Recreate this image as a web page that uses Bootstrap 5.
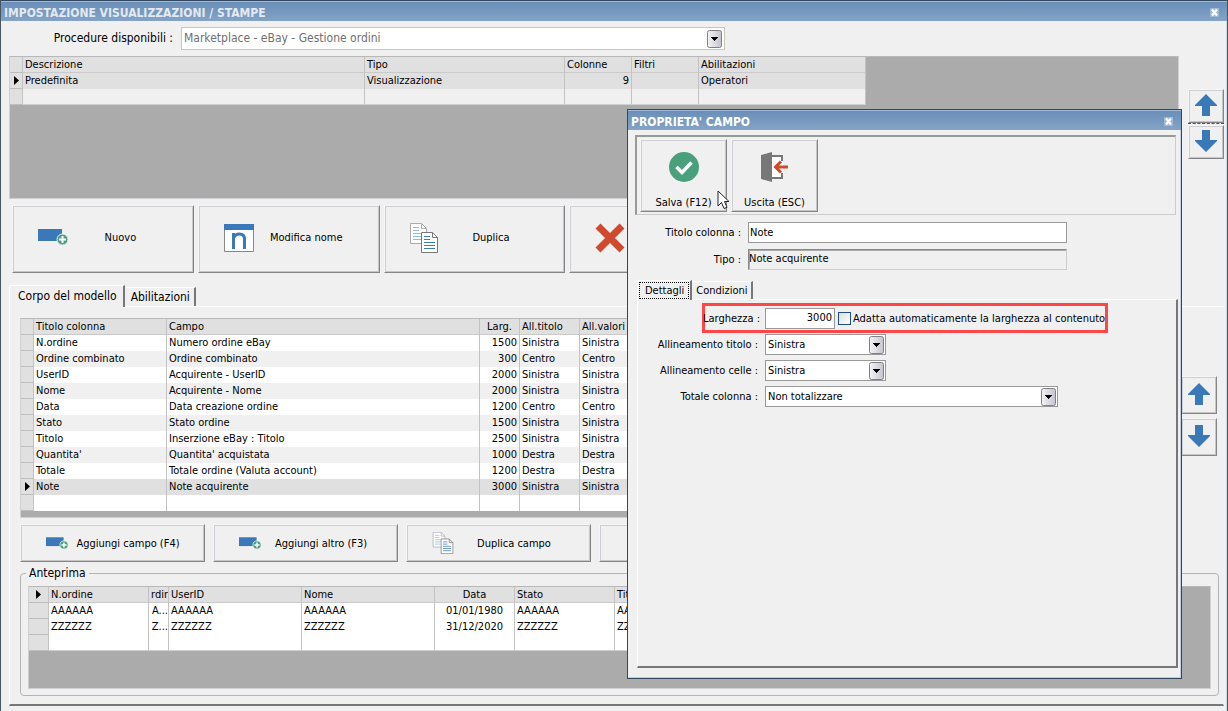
<!DOCTYPE html>
<html lang="it">
<head>
<meta charset="utf-8">
<meta name="viewport" content="width=device-width, initial-scale=1">
<title>Impostazione visualizzazioni / stampe</title>
<link href="https://cdn.jsdelivr.net/npm/bootstrap@5.3.0/dist/css/bootstrap.min.css" rel="stylesheet">
<style>
  :root { --face: #f0f0f0; --line: #c3c3c3; --well: #ababab; --head: #e0e0e0; }
  body { font: 11px/15px "DejaVu Sans Condensed", "Liberation Sans", sans-serif; color: #000; background: var(--face); }
  button, input, select { font: inherit; color: inherit; }
  .win { min-height: 100vh; border: 1px solid #4a5562; border-top-color: #33485e; box-shadow: inset -1px -1px #cfdae6; padding: 0 3px 7px 0; }
  .caption { height: 20px; margin-right: -3px; background: linear-gradient(#6a8fb8, #84a3c6); border-top: 1px solid #9dbbd8; color: #e4e9f0; font-weight: bold; font-size: 12px; line-height: 16px; padding: 2px 8px 0 3px; }
  .caption h1 { font: inherit; margin: 0; }
  .caption button { width: 9px; height: 9px; border: 0; padding: 0; background: #9fb8d3; display: flex; margin-bottom: 1px; }
  .big { font-size: 12px; }
  .picker { padding: 6px 0; }
  .picker label { width: 168px; }
  .combo { appearance: none; border: 1px solid #999; background: #fff url("data:image/svg+xml,%3Csvg xmlns='http://www.w3.org/2000/svg' width='15' height='18'%3E%3Cdefs%3E%3ClinearGradient id='g'%3E%3Cstop stop-color='%23f4f4f7'/%3E%3Cstop offset='1' stop-color='%23c4c4ce'/%3E%3C/linearGradient%3E%3C/defs%3E%3Crect x='.5' y='.5' width='14' height='17' rx='2' fill='url(%23g)' stroke='%23808085'/%3E%3Cpath d='M4 7h7v1h-1v1h-1v1h-1v1h-1v-1h-1v-1h-1v-1h-1z'/%3E%3C/svg%3E") no-repeat right 1px center; height: 21px; padding: 0 20px 0 2px; border-radius: 0; }
  .combo-main { width: 544px; height: 23px; color: #707070; border-color: #c8c8b8; background-position: right 2px center; padding-bottom: 1px; }
  .combo-short { width: 121px; }
  .combo-long { width: 293px; }
  .well { background: var(--well); border: 1px solid #d0d0d4; border-top-color: #b8b8b8; overflow: hidden; }
  .well-top { height: 143px; margin-right: 9px; }
  .well-body { padding-bottom: 6px; }
  .gridtab { table-layout: fixed; border-collapse: separate; border-spacing: 0; width: 0; }
  .gridtab th, .gridtab td { height: 16px; line-height: 16px; padding: 0 2px; font-weight: normal; border-right: 1px solid var(--line); background: #fff; white-space: nowrap; overflow: hidden; }
  .gridtab thead th { background: var(--head); border-bottom: 1px solid #cacaca; line-height: 15px; }
  .gridtab tbody tr:nth-child(even) td { background: var(--face); }
  .gridtab tr > :first-child { background: var(--head) !important; border-bottom: 1px solid #bdbdbd; padding: 0; }
  .gridtab tbody tr.current td { background: var(--head); }
  .gridtab tbody tr.plain td { background: var(--face); }
  .gridtab .selhere { background: #f2f2f2 !important; }
  .gridtab svg { display: block; margin: auto; }
  .gridtab .lastrow td { border-bottom: 1px solid #d0d0d0; }
  .prevtab tbody tr td { background: #fff !important; }
  .gridtab .tight { padding: 0; text-align: right; }
  .face { background: var(--face); border: 1px solid #f6f6f6; border-right-color: #858585; border-bottom-color: #858585; box-shadow: inset 1px 1px #cdcdd3, inset -1px -1px #c6c6c6; padding: 0; border-radius: 0; }
  .actions { padding-left: 3px; margin-top: 6px; gap: 4px; height: 68px; overflow: hidden; }
  .actions .face { flex: 0 0 15%; padding: 0 20px 3px 25px; }
  .rowbtns { gap: 8px; height: 38px; margin-top: 6px; overflow: hidden; }
  .rowbtns .face { flex: 0 0 185px; padding: 0 16px 0 25px; }
  .arrow { width: 36px; height: 34px; display: grid; place-items: center; }
  .arrow-tall { height: 38px; }
  .arrow svg { margin-bottom: 3px; }
  .echo { border-top: 1px dashed #33567c; height: 2px; }
  .side-top { padding-top: 33px; }
  .side-body { padding: 58px 2px 0 0; }
  .tabrow button { border: 0; border-top: 1px solid #fff; border-right: 2px solid #777; background: var(--face); padding: 0 4px 0 6px; height: 19px; border-radius: 2px 0 0 0; }
  .tabrow .active { border-left: 1px solid #fff; height: 22px; margin-bottom: -1px; position: relative; }
  .maintabs .active { padding: 0 6px 0 8px; }
  .sheet { border: 1px solid #fff; border-right-color: transparent; border-bottom: 2px solid #777; padding: 11px 4px 8px 10px; }
  .group { border: 1px solid #b4b4b4; border-radius: 4px; padding: 5px 7px 6px; margin: 4px 0 0; height: 130px; }
  .group legend { float: none; width: auto; font-size: 12px; line-height: 15px; padding: 0 3px; margin: 0 0 0 -2px; }
  .group .well { height: 103px; }
  .dialogbox { position: absolute; left: 626px; top: 108px; width: 555px; height: 570px; background: var(--face); border: 1px solid #33485e; box-shadow: inset -1px -1px #bfd0e2; }
  .dialogbox .caption { margin: 0; color: #fff; }
  .tools { margin: 5px 5px 0 7px; height: 80px; padding: 2px 3px; gap: 4px; border: 1px solid #ccc; border-top: 2px solid #999; border-left: 2px solid #999; }
  .tools .face { width: 87px; height: 73px; padding: 12px 0 1px; }
  .fields { margin-top: 7px; display: grid; grid-template-columns: 113px 319px; column-gap: 7px; row-gap: 6px; align-items: center; }
  .fields label, .detail label { text-align: right; }
  .txt { border: 1px solid #999; height: 21px; border-radius: 0; background: #fff; padding: 0 2px 1px 1px; flex-shrink: 0; }
  .txt-flat { background: var(--face); padding: 0 0 3px; border-color: #888 #ccc #ccc #888; box-shadow: inset 1px 1px #aaa; }
  .txt-num { width: 70px; text-align: right; }
  .dlgtabs { margin: 10px 0 0 9px; }
  .dlgtabs button { height: 18px; padding: 0 3px 0 4px; }
  .dlgtabs .active { height: 20px; padding: 1px; }
  .dlgtabs .active span { display: block; border: 1px dotted #000; padding: 0 4px 0 5px; height: 17px; }
  .dlgsheet { margin: 0 3px 10px 9px; border: 1px solid #fff; border-right: 2px solid #777; border-bottom: 2px solid #777; padding-top: 3px; }
  .marked { border: 3px solid #ff4747; width: 406px; height: 30px; margin-left: 64px; }
  .marked label { white-space: nowrap; }
  .marked .wlabel { width: 55px; display: flex; justify-content: flex-end; margin-right: 5px; }
  .marked input[type=checkbox] { appearance: none; flex-shrink: 0; width: 13px; height: 13px; border: 1px solid #1f4e80; background: linear-gradient(135deg, #dedede, #fff); margin: 0 2px 0 3px; }
  .detail { display: grid; grid-template-columns: 120px auto; column-gap: 7px; row-gap: 5px; align-items: center; justify-content: start; margin-top: 1px; }
  .pointer { position: absolute; left: 89px; top: 80px; }
</style>
</head>
<body>
<svg width="0" height="0" class="position-absolute" aria-hidden="true">
  <defs>
    <symbol id="i-x" viewBox="0 0 9 9"><path d="M2 1.500l5 6M7 1.500l-5 6" stroke="#fff" stroke-width="2.200"/></symbol>
    <symbol id="i-up" viewBox="0 0 22 22"><path d="M11 0L22 11V12H15V22H7V12H0V11z" fill="#3b78b8"/></symbol>
    <symbol id="i-down" viewBox="0 0 22 22"><path d="M11 22L22 11V10H15V0H7V10H0V11z" fill="#3b78b8"/></symbol>
    <symbol id="i-new" viewBox="0 0 30 17"><path d="M0 0h24v12H0z" fill="#3b78b8"/><circle cx="24.500" cy="10.500" r="5.500" fill="#4a9f7d" stroke="#f0f0f0"/><path d="M24.500 7v7M21 10.500h7" stroke="#fff" stroke-width="2"/></symbol>
    <symbol id="i-copy" viewBox="0 0 28 30"><g fill="#fff" stroke="#aaa"><path d="M.5.500h11l5 5v15H.5z"/><path d="M11.500.500v5h5" fill="none"/></g><path d="M3 4.500h6M3 7.500h6M3 10.500h11M3 13.500h8M3 16.500h8" stroke="#8bbbe3"/><g fill="#fff" stroke="#777"><path d="M11.500 9.500h11l5 5v15h-16z"/><path d="M22.500 9.500v5h5" fill="none"/></g><path d="M14 13.500h6M14 16.500h6M14 19.500h11M14 22.500h11M14 25.500h11" stroke="#3b78b8"/></symbol>
    <symbol id="i-row" viewBox="0 0 5 9"><path d="M0 0l5 4.500L0 9z"/></symbol>
  </defs>
</svg>

<div class="win d-flex flex-column position-relative">
  <header class="caption d-flex align-items-center justify-content-between">
    <h1>IMPOSTAZIONE VISUALIZZAZIONI / STAMPE</h1>
    <button aria-label="Chiudi"><svg width="9" height="9"><use href="#i-x"/></svg></button>
  </header>

  <main class="d-flex flex-column flex-grow-1 ps-2">
    <div class="picker d-flex align-items-center big">
      <label for="proc" class="text-end pe-1">Procedure disponibili :</label>
      <select id="proc" class="combo combo-main ms-1"><option>Marketplace - eBay - Gestione ordini</option></select>
    </div>

    <div class="d-flex">
      <div class="well well-top flex-grow-1">
        <table class="gridtab">
          <colgroup><col style="width:13px"><col style="width:342px"><col style="width:200px"><col style="width:67px"><col style="width:67px"><col style="width:167px"></colgroup>
          <thead><tr><th></th><th>Descrizione</th><th>Tipo</th><th>Colonne</th><th>Filtri</th><th>Abilitazioni</th></tr></thead>
          <tbody>
            <tr class="current"><th><svg width="5" height="9"><use href="#i-row"/></svg></th><td>Predefinita</td><td>Visualizzazione</td><td class="text-end">9</td><td></td><td>Operatori</td></tr>
            <tr class="plain lastrow"><th></th><td></td><td></td><td></td><td></td><td></td></tr>
          </tbody>
        </table>
      </div>
      <div class="side-top">
        <button class="face arrow" aria-label="Sposta su"><svg width="22" height="22"><use href="#i-up"/></svg></button>
        <div class="echo"></div>
        <button class="face arrow" aria-label="Sposta giù"><svg width="22" height="22"><use href="#i-down"/></svg></button>
      </div>
    </div>

    <div class="actions d-flex">
      <button class="face d-flex align-items-center"><svg width="30" height="17"><use href="#i-new"/></svg><span class="flex-grow-1">Nuovo</span></button>
      <button class="face d-flex align-items-center"><svg width="30" height="28"><path d="M.5.500h29v27H.5z" fill="#fff" stroke="#888"/><path d="M0 0h30v6H0z" fill="#3b78b8"/><path d="M9.500 25V9M9.500 14Q11 10 15.500 10Q20.500 10 20.500 15V25" fill="none" stroke="#3b78b8" stroke-width="3"/></svg><span class="flex-grow-1">Modifica nome</span></button>
      <button class="face d-flex align-items-center"><svg width="28" height="30"><use href="#i-copy"/></svg><span class="flex-grow-1">Duplica</span></button>
      <button class="face d-flex align-items-center" aria-label="Elimina"><svg width="30" height="30"><path d="M3 3l24 24M27 3L3 27" stroke="#d04a30" stroke-width="7"/></svg></button>
    </div>

    <div class="tabrow maintabs d-flex align-items-end mt-2 pt-1 big">
      <button class="active">Corpo del modello</button>
      <button>Abilitazioni</button>
    </div>
    <section class="sheet flex-grow-1">
      <div class="d-flex">
        <div class="well well-body flex-grow-1">
          <table class="gridtab">
            <colgroup><col style="width:13px"><col style="width:133px"><col style="width:313px"><col style="width:40px"><col style="width:60px"><col style="width:60px"></colgroup>
            <thead><tr><th></th><th>Titolo colonna</th><th>Campo</th><th class="text-center">Larg.</th><th>All.titolo</th><th>All.valori</th></tr></thead>
            <tbody>
              <tr><th></th><td>N.ordine</td><td>Numero ordine eBay</td><td class="text-end">1500</td><td>Sinistra</td><td>Sinistra</td></tr>
              <tr><th></th><td>Ordine combinato</td><td>Ordine combinato</td><td class="text-end">300</td><td>Centro</td><td>Centro</td></tr>
              <tr><th></th><td>UserID</td><td>Acquirente - UserID</td><td class="text-end">2000</td><td>Sinistra</td><td>Sinistra</td></tr>
              <tr><th></th><td>Nome</td><td>Acquirente - Nome</td><td class="text-end">2000</td><td>Sinistra</td><td>Sinistra</td></tr>
              <tr><th></th><td>Data</td><td>Data creazione ordine</td><td class="text-end">1200</td><td>Centro</td><td>Centro</td></tr>
              <tr><th></th><td>Stato</td><td>Stato ordine</td><td class="text-end">1500</td><td>Sinistra</td><td>Sinistra</td></tr>
              <tr><th></th><td>Titolo</td><td>Inserzione eBay : Titolo</td><td class="text-end">2500</td><td>Sinistra</td><td>Sinistra</td></tr>
              <tr><th></th><td>Quantita'</td><td>Quantita' acquistata</td><td class="text-end">1000</td><td>Destra</td><td>Destra</td></tr>
              <tr><th></th><td>Totale</td><td>Totale ordine (Valuta account)</td><td class="text-end">1200</td><td>Destra</td><td>Destra</td></tr>
              <tr class="current"><th><svg width="5" height="9"><use href="#i-row"/></svg></th><td>Note</td><td>Note acquirente</td><td class="text-end">3000</td><td>Sinistra</td><td>Sinistra</td></tr>
              <tr><th></th><td></td><td></td><td></td><td></td><td></td></tr>
            </tbody>
          </table>
        </div>
        <div class="side-body d-flex flex-column gap-1">
          <button class="face arrow arrow-tall" aria-label="Sposta campo su"><svg width="22" height="22"><use href="#i-up"/></svg></button>
          <button class="face arrow arrow-tall" aria-label="Sposta campo giù"><svg width="22" height="22"><use href="#i-down"/></svg></button>
        </div>
      </div>
      <div class="rowbtns d-flex">
        <button class="face d-flex align-items-center"><svg width="22" height="13"><use href="#i-new"/></svg><span class="flex-grow-1">Aggiungi campo (F4)</span></button>
        <button class="face d-flex align-items-center"><svg width="22" height="13"><use href="#i-new"/></svg><span class="flex-grow-1">Aggiungi altro (F3)</span></button>
        <button class="face d-flex align-items-center"><svg width="22" height="22"><use href="#i-copy"/></svg><span class="flex-grow-1">Duplica campo</span></button>
        <button class="face" aria-label="Elimina campo"></button>
      </div>
      <fieldset class="group">
        <legend>Anteprima</legend>
        <div class="well">
          <table class="gridtab prevtab">
            <colgroup><col style="width:20px"><col style="width:100px"><col style="width:20px"><col style="width:133px"><col style="width:133px"><col style="width:80px"><col style="width:100px"><col style="width:133px"></colgroup>
            <thead><tr><th class="selhere"><svg width="5" height="9"><use href="#i-row"/></svg></th><th>N.ordine</th><th class="tight">rdir</th><th>UserID</th><th>Nome</th><th class="text-center">Data</th><th>Stato</th><th>Titolo</th></tr></thead>
            <tbody>
              <tr><th></th><td>AAAAAA</td><td class="tight">A...</td><td>AAAAAA</td><td>AAAAAA</td><td class="text-center">01/01/1980</td><td>AAAAAA</td><td>AAAAAA</td></tr>
              <tr><th></th><td>ZZZZZZ</td><td class="tight">Z...</td><td>ZZZZZZ</td><td>ZZZZZZ</td><td class="text-center">31/12/2020</td><td>ZZZZZZ</td><td>ZZZZZZ</td></tr>
              <tr class="lastrow"><th></th><td></td><td></td><td></td><td></td><td></td><td></td><td></td></tr>
            </tbody>
          </table>
        </div>
      </fieldset>
    </section>
  </main>

  <div class="dialogbox d-flex flex-column" role="dialog" aria-labelledby="dlgtitle">
    <div class="caption d-flex align-items-center justify-content-between">
      <h1 id="dlgtitle">PROPRIETA' CAMPO</h1>
      <button aria-label="Chiudi"><svg width="9" height="9"><use href="#i-x"/></svg></button>
    </div>
    <div class="tools d-flex">
      <button class="face d-flex flex-column align-items-center justify-content-between"><svg width="30" height="30"><circle cx="15" cy="15" r="15" fill="#4a9f7d"/><path d="M7.500 15l5.500 5.500 9.500-10" fill="none" stroke="#fff" stroke-width="3.500"/></svg>Salva (F12)</button>
      <button class="face d-flex flex-column align-items-center justify-content-between"><svg width="28" height="30"><path d="M11 4h11v22H11z" fill="#fff"/><path d="M11 4h10v5M21 21v5H11" fill="none" stroke="#777" stroke-width="2"/><path d="M0 3L11 0v30L0 27z" fill="#777"/><path d="M27 15H15M20 9.500L14.500 15l5.500 5.500" fill="none" stroke="#d04a30" stroke-width="3"/></svg>Uscita (ESC)</button>
    </div>
    <div class="fields">
      <label for="titolo">Titolo colonna :</label><input id="titolo" class="txt" value="Note">
      <label for="tipo">Tipo :</label><input id="tipo" class="txt txt-flat" value="Note acquirente" readonly>
    </div>
    <div class="tabrow dlgtabs d-flex align-items-end">
      <button class="active"><span>Dettagli</span></button>
      <button>Condizioni</button>
    </div>
    <section class="dlgsheet flex-grow-1">
      <div class="marked d-flex align-items-center">
        <label for="larg" class="wlabel">Larghezza :</label>
        <input id="larg" class="txt txt-num" value="3000">
        <input type="checkbox" id="auto"><label for="auto">Adatta automaticamente la larghezza al contenuto</label>
      </div>
      <div class="detail">
        <label for="at">Allineamento titolo :</label><select id="at" class="combo combo-short"><option>Sinistra</option></select>
        <label for="ac">Allineamento celle :</label><select id="ac" class="combo combo-short"><option>Sinistra</option></select>
        <label for="tc">Totale colonna :</label><select id="tc" class="combo combo-long"><option>Non totalizzare</option></select>
      </div>
    </section>
    <svg class="pointer" width="13" height="20" aria-hidden="true"><path d="M1 1v15l3.500-3.500L7 18.500l3-1.200L7.500 11.500H12z" fill="#fff" stroke="#223"/></svg>
  </div>
</div>
<script src="https://cdn.jsdelivr.net/npm/bootstrap@5.3.0/dist/js/bootstrap.bundle.min.js"></script>
</body>
</html>
